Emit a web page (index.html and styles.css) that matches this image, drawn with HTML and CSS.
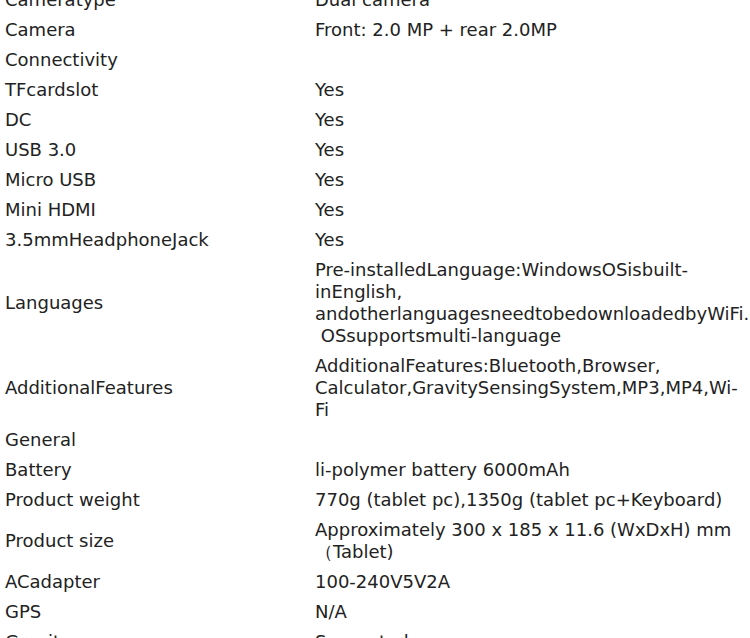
FILE: index.html
```html
<!DOCTYPE html>
<html>
<head>
<meta charset="utf-8">
<link rel="stylesheet" href="styles.css">
</head>
<body>
<div class="page">
<table class="specs">
<tbody>
<tr><td class="k">Cameratype</td><td class="v">Dual camera</td></tr>
<tr><td class="k">Camera</td><td class="v">Front: 2.0 MP + rear 2.0MP</td></tr>
<tr><td class="k">Connectivity</td><td class="v"></td></tr>
<tr><td class="k">TFcardslot</td><td class="v">Yes</td></tr>
<tr><td class="k">DC</td><td class="v">Yes</td></tr>
<tr><td class="k">USB 3.0</td><td class="v">Yes</td></tr>
<tr><td class="k">Micro USB</td><td class="v">Yes</td></tr>
<tr><td class="k">Mini HDMI</td><td class="v">Yes</td></tr>
<tr><td class="k">3.5mmHeadphoneJack</td><td class="v">Yes</td></tr>
<tr><td class="k">Languages</td><td class="v">Pre-installedLanguage:WindowsOSisbuilt-inEnglish, andotherlanguagesneedtobedownloadedbyWiFi. &nbsp;OSsupportsmulti-language</td></tr>
<tr><td class="k">AdditionalFeatures</td><td class="v">AdditionalFeatures:Bluetooth,Browser, Calculator,GravitySensingSystem,MP3,MP4,Wi-Fi</td></tr>
<tr><td class="k">General</td><td class="v"></td></tr>
<tr><td class="k">Battery</td><td class="v">li-polymer battery 6000mAh</td></tr>
<tr><td class="k">Product weight</td><td class="v">770g (tablet pc),1350g (tablet pc+Keyboard)</td></tr>
<tr><td class="k">Product size</td><td class="v">Approximately 300 x 185 x 11.6 (WxDxH) mm （Tablet)</td></tr>
<tr><td class="k">ACadapter</td><td class="v">100-240V5V2A</td></tr>
<tr><td class="k">GPS</td><td class="v">N/A</td></tr>
<tr><td class="k">Gravity sensor</td><td class="v">Supported</td></tr>
</tbody>
</table>
</div>
</body>
</html>
```
FILE: styles.css
```css
html, body {
  margin: 0;
  padding: 0;
  background: #ffffff;
  overflow: hidden;
}
.page {
  margin-top: -15px;
}
.specs {
  border-collapse: collapse;
  border-spacing: 0;
  width: 750px;
  table-layout: fixed;
  font-family: "DejaVu Sans", Verdana, sans-serif;
  font-size: 18px;
  line-height: 22px;
  color: #222222;
}
.specs td {
  padding: 4px 5px;
  vertical-align: middle;
  text-align: left;
}
.specs .k {
  width: 300px;
}
.specs .v {
  width: auto;
}
```
